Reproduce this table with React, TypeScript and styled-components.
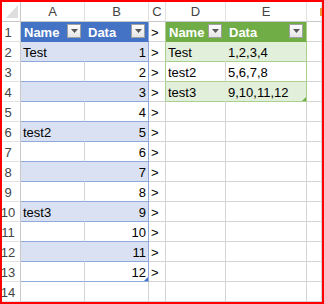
import React, { Fragment } from 'react';
import styled, { createGlobalStyle } from 'styled-components';

const GlobalStyle = createGlobalStyle`
  html, body { margin: 0; padding: 0; background: #ffffff; }
  body { font-family: "Liberation Sans", Arial, sans-serif; }
`;

const GRID = '#d4d4d4';
const HEAD_LINE = '#c8c8c8';
const BLUE = '#4472c4';
const BLUE_BAND = '#d9e1f2';
const BLUE_LINE = '#8ea9db';
const GREEN = '#70ad47';
const GREEN_BAND = '#e2efda';
const GREEN_LINE = '#a9d08e';

const Frame = styled.div`
  box-sizing: border-box;
  width: 324px;
  height: 304px;
  border: 2px solid #ff0000;
  overflow: hidden;
  background: #ffffff;
`;

const Sheet = styled.div`
  display: grid;
  grid-template-columns: 19px 64px 64px 17px 60px 81px 15px;
  grid-auto-rows: 20px;
`;

type Align = 'left' | 'right' | 'center';

const Cell = styled.div<{ $bg?: string; $r?: string; $b?: string; $align?: Align }>`
  box-sizing: border-box;
  position: relative;
  display: flex;
  align-items: flex-end;
  justify-content: ${(p) =>
    p.$align === 'right' ? 'flex-end' : p.$align === 'center' ? 'center' : 'flex-start'};
  background: ${(p) => p.$bg ?? '#ffffff'};
  border-right: 1px solid ${(p) => p.$r ?? GRID};
  border-bottom: 1px solid ${(p) => p.$b ?? GRID};
  padding: 0 2px 1px;
  font-size: 13px;
  line-height: 15px;
  color: #000000;
  white-space: nowrap;
`;

const Corner = styled(Cell)`
  padding: 0;
  align-items: stretch;
  border-right-color: ${HEAD_LINE};
  border-bottom-color: ${HEAD_LINE};
`;

const ColHead = styled(Cell)`
  justify-content: center;
  color: #444444;
  border-right-color: #e1e1e1;
  border-bottom-color: ${HEAD_LINE};
  padding-bottom: 2px;
`;

const RowHead = styled(Cell)`
  justify-content: center;
  color: #444444;
  padding: 0 6px 1px 0;
  border-right-color: ${HEAD_LINE};
  border-bottom-color: #e1e1e1;
`;

const TableHead = styled(Cell)`
  color: #ffffff;
  font-weight: bold;
  padding-left: 3px;
`;

const FilterButton = styled.span`
  box-sizing: border-box;
  flex: none;
  width: 14px;
  height: 14px;
  margin: 0 1px 2px auto;
  border: 1px solid #a0a0a0;
  background: linear-gradient(#fdfdfd, #e6e6e6);
  display: flex;
  align-items: center;
  justify-content: center;
`;

const ResizeHandle = styled.span<{ $c: string }>`
  position: absolute;
  right: 0;
  bottom: 0;
  width: 0;
  height: 0;
  border-left: 4px solid transparent;
  border-bottom: 4px solid ${(p) => p.$c};
`;

const EdgeMark = styled.span`
  position: absolute;
  right: -1px;
  top: 6px;
  width: 2px;
  height: 8px;
  background: #e89a3a;
`;

const Arrow = () => (
  <svg width="7" height="4" viewBox="0 0 7 4">
    <path d="M0 0h7L3.5 4z" fill="#595959" />
  </svg>
);

const t1: [string, number][] = [
  ['Test', 1], ['', 2], ['', 3], ['', 4],
  ['test2', 5], ['', 6], ['', 7], ['', 8],
  ['test3', 9], ['', 10], ['', 11], ['', 12],
];

const t2: [string, string][] = [
  ['Test', '1,2,3,4'],
  ['test2', '5,6,7,8'],
  ['test3', '9,10,11,12'],
];

function BlueTable({ r }: { r: number }) {
  if (r === 1) {
    return (
      <>
        <TableHead $bg={BLUE} $r={BLUE} $b={BLUE}>Name<FilterButton><Arrow /></FilterButton></TableHead>
        <TableHead $bg={BLUE} $r={BLUE_LINE} $b={BLUE}>Data<FilterButton><Arrow /></FilterButton></TableHead>
      </>
    );
  }
  if (r >= 2 && r <= 13) {
    const i = r - 2;
    const banded = i % 2 === 0;
    const bg = banded ? BLUE_BAND : '#ffffff';
    const [name, val] = t1[i];
    return (
      <>
        <Cell $bg={bg} $r={banded ? BLUE_BAND : GRID} $b={BLUE_LINE}>{name}</Cell>
        <Cell $bg={bg} $r={BLUE_LINE} $b={BLUE_LINE} $align="right">
          {val}
          {r === 13 && <ResizeHandle $c={BLUE} />}
        </Cell>
      </>
    );
  }
  return (
    <>
      <Cell />
      <Cell />
    </>
  );
}

function GreenTable({ r }: { r: number }) {
  if (r === 1) {
    return (
      <>
        <TableHead $bg={GREEN} $r={GREEN} $b={GREEN}>Name<FilterButton><Arrow /></FilterButton></TableHead>
        <TableHead $bg={GREEN} $r={GREEN_LINE} $b={GREEN}>Data<FilterButton><Arrow /></FilterButton></TableHead>
      </>
    );
  }
  if (r >= 2 && r <= 4) {
    const i = r - 2;
    const banded = i % 2 === 0;
    const bg = banded ? GREEN_BAND : '#ffffff';
    const [name, val] = t2[i];
    return (
      <>
        <Cell $bg={bg} $r={banded ? GREEN_BAND : GRID} $b={GREEN_LINE}>{name}</Cell>
        <Cell $bg={bg} $r={GREEN_LINE} $b={GREEN_LINE}>
          {val}
          {r === 4 && <ResizeHandle $c={GREEN} />}
        </Cell>
      </>
    );
  }
  return (
    <>
      <Cell />
      <Cell />
    </>
  );
}

const letters = ['A', 'B', 'C', 'D', 'E', ''];
const rows = Array.from({ length: 14 }, (_, i) => i + 1);

export default function App() {
  return (
    <>
      <GlobalStyle />
      <Frame>
        <Sheet>
          <Corner>
            <svg width="18" height="19" viewBox="0 0 18 19">
              <path d="M16 3V16H4z" fill="#dedede" />
            </svg>
          </Corner>
          {letters.map((l, i) => (
            <ColHead key={i}>
              {l}
              {i === letters.length - 1 && <EdgeMark />}
            </ColHead>
          ))}
          {rows.map((r) => (
            <Fragment key={r}>
              <RowHead>{r}</RowHead>
              <BlueTable r={r} />
              <Cell $r={r <= 4 ? GREEN_LINE : GRID}>{r <= 13 ? '>' : ''}</Cell>
              <GreenTable r={r} />
              <Cell />
            </Fragment>
          ))}
        </Sheet>
      </Frame>
    </>
  );
}
